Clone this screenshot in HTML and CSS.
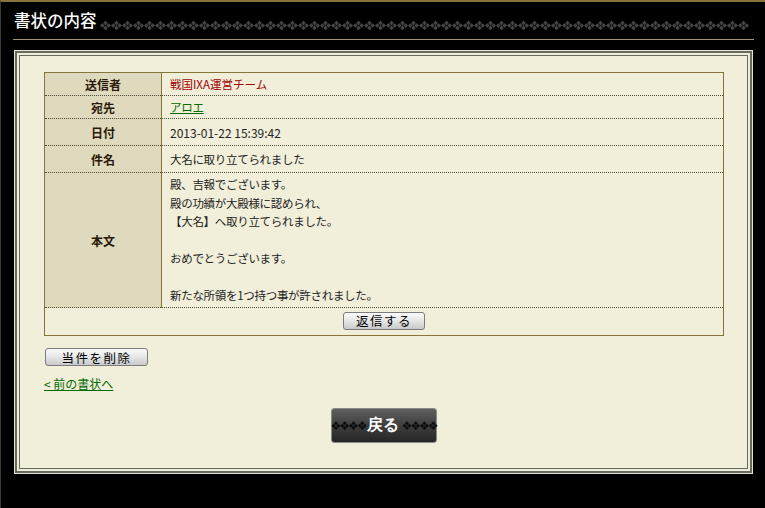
FILE: index.html
```html
<!DOCTYPE html>
<html>
    <head>
        <meta charset="utf-8">
        <link rel="stylesheet" href="styles.css">
    </head>
    <body>
    <div class="frame">
        <div class="titlebar">
            <h1 class="title">書状の内容</h1>
            <svg class="ornament" height="11">
                <defs>
                    <pattern id="dia" width="11" height="11" patternUnits="userSpaceOnUse">
                        <path d="M5.5 0.8 L7.8 3.1 L5.5 5.4 L3.2 3.1 Z M2.3 3.2 L4.6 5.5 L2.3 7.8 L0 5.5 Z M8.7 3.2 L11 5.5 L8.7 7.8 L6.4 5.5 Z M5.5 5.6 L7.8 7.9 L5.5 10.2 L3.2 7.9 Z" fill="#444"/>
                    </pattern>
                </defs>
                <rect width="100%" height="11" fill="url(#dia)"/>
            </svg>
        </div>
        <div class="rule"></div>

        <div class="panel">
            <table class="letter">
                <tr class="row-s"><th>送信者</th><td class="sender">戦国IXA運営チーム</td></tr>
                <tr class="row-s"><th>宛先</th><td><a class="green" href="#">アロエ</a></td></tr>
                <tr class="row-m"><th>日付</th><td class="date">2013-01-22 15:39:42</td></tr>
                <tr class="row-m"><th>件名</th><td>大名に取り立てられました</td></tr>
                <tr class="row-body">
                    <th>本文</th>
                    <td class="body-text">殿、吉報でございます。<br>殿の功績が大殿様に認められ、<br>【大名】へ取り立てられました。<br><br>おめでとうございます。<br><br>新たな所領を1つ持つ事が許されました。</td>
                </tr>
                <tr class="row-r"><td colspan="2" class="reply"><button class="btn btn-reply">返信する</button></td></tr>
            </table>

            <button class="btn btn-delete">当件を削除</button>
            <div class="prev"><a class="green" href="#">&lt; 前の書状へ</a></div>

            <div class="back-wrap">
                <button class="back"><span class="orn">❖❖❖❖</span><span class="back-label">戻る</span><span class="orn">❖❖❖❖</span></button>
            </div>
        </div>
    </div>
    </body>
</html>
```

FILE: styles.css
```css
body {
    margin: 0;
    background-color: #000;
    font-family: "Noto Sans CJK JP", "Liberation Sans", sans-serif;
    font-size: 12px;
}
.frame {
    width: 765px;
    height: 508px;
    border-top: 2px solid #857538;
    box-sizing: border-box;
    border-left: 1px solid #3a3a3a;
}
.titlebar {
    display: flex;
    align-items: center;
    height: 37px;
}
.title {
    color: #fff;
    font-size: 16.5px;
    font-weight: 500;
    margin: 0 3px 0 13px;
    line-height: 1;
}
.ornament {
    flex: 1;
    margin-top: 9px;
    margin-right: 16px;
}
.rule {
    height: 1px;
    background-color: #a59372;
    margin: 0 11px 0 12px;
}
.panel {
    box-sizing: border-box;
    width: 739px;
    height: 424px;
    margin: 10px 0 0 13px;
    background-color: #f1efda;
    border: 1px solid #e6e4d2;
    box-shadow: inset 0 0 0 2px #6a6a5a, inset 0 0 0 4px #eeeddc, inset 0 0 0 5px #6a6a5a;
    padding: 21px 29px 0 29px;
}
.letter {
    width: 680px;
    border-collapse: collapse;
    border: 1px solid #857538;
    font-size: 11.5px;
}
.letter th {
    width: 116px;
    background-color: #dfd9bd;
    color: #2b1a0c;
    font-weight: bold;
    font-size: 12px;
    text-align: center;
    border-right: 1px solid #857538;
    border-bottom: 1px dotted #4a4a3a;
    padding: 0;
}
.letter td {
    color: #222;
    padding: 0 0 0 8px;
    letter-spacing: -0.3px;
    border-bottom: 1px dotted #4a4a3a;
}
.row-s th, .row-s td {
    height: 22px;
}
.row-m th, .row-m td {
    height: 26px;
}
.row-r td {
    height: 27px;
}
.row-body th, .row-body td {
    height: 134px;
}
.body-text {
    line-height: 18.5px;
}
.letter td.sender {
    color: #a00000;
    letter-spacing: 0;
}
.letter td.date {
    font-size: 12px;
    letter-spacing: 0;
}
.green {
    color: #006b00;
    text-decoration: underline;
}
.letter td.reply {
    text-align: center;
    padding: 0;
    border-bottom: none;
    letter-spacing: 0;
}
.btn {
    font-family: "Noto Sans CJK JP", sans-serif;
    font-size: 12.5px;
    color: #000;
    background: linear-gradient(#fafafa, #e6e6e6 50%, #c9c9c9);
    border: 1px solid #7c7c7c;
    border-radius: 3px;
    height: 18px;
    padding: 0;
    line-height: 15px;
    letter-spacing: 1.5px;
    vertical-align: middle;
}
.btn-reply {
    width: 82px;
    margin-bottom: 2px;
}
.btn-delete {
    width: 103px;
    margin: 12px 0 0 1px;
    display: block;
}
.prev {
    margin-top: 10px;
    line-height: 16px;
}
.back-wrap {
    display: flex;
    justify-content: center;
    margin-top: 16px;
}
.back {
    width: 106px;
    height: 35px;
    border: 1px solid #8a8a8a;
    border-radius: 3px;
    background: linear-gradient(#606060, #3e3e3e 50%, #262626);
    display: flex;
    align-items: center;
    justify-content: center;
    padding: 0;
    gap: 1px;
    white-space: nowrap;
}
.orn {
    font-family: "DejaVu Sans", sans-serif;
    font-size: 12px;
    color: #0c0c0c;
    letter-spacing: -2px;
    flex-shrink: 0;
}
.back-label {
    color: #fff;
    font-size: 16px;
    font-weight: bold;
    flex-shrink: 0;
    margin-right: 2px;
}
```
